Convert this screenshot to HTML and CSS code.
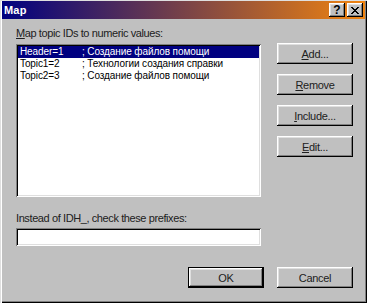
FILE: index.html
```html
<!DOCTYPE html>
<html lang="en">
<head>
    <meta charset="UTF-8">
    <title>Map</title>
    <link rel="stylesheet" href="styles.css">
</head>
<body>

    <div class="window">
        <!-- Title bar -->
        <div class="titlebar">
            <span class="title">Map</span>
            <div class="title-buttons">
                <button class="tbtn help">?</button>
                <button class="tbtn close">
                    <svg width="8" height="7" viewBox="0 0 8 7">
                        <path d="M0 0h2v1h1v1h2v-1h1v-1h2v1h-1v1h-1v1h-1v1h1v1h1v1h1v1h-2v-1h-1v-1h-2v1h-1v1h-2v-1h1v-1h1v-1h1v-1h-1v-1h-1v-1h-1z" fill="#000"/>
                    </svg>
                </button>
            </div>
        </div>

        <div class="content">
            <div class="top">
                <div class="left">
                    <div class="label"><u>M</u>ap topic IDs to numeric values:</div>
                    <div class="listbox">
                        <div class="row selected"><span class="id">Header=1</span><span>; Создание файлов помощи</span></div>
                        <div class="row"><span class="id">Topic1=2</span><span>; Технологии создания справки</span></div>
                        <div class="row"><span class="id">Topic2=3</span><span>; Создание файлов помощи</span></div>
                    </div>
                    <div class="label prefix-label">Instead of IDH_, check these prefixes:</div>
                    <div class="field"></div>
                </div>
                <div class="side">
                    <button class="btn"><u>A</u>dd...</button>
                    <button class="btn"><u>R</u>emove</button>
                    <button class="btn"><u>I</u>nclude...</button>
                    <button class="btn"><u>E</u>dit...</button>
                </div>
            </div>

            <div class="footer">
                <button class="btn default">OK</button>
                <button class="btn">Cancel</button>
            </div>
        </div>
    </div>

</body>
</html>
```

FILE: styles.css
```css
body {
    margin: 0;
    font-family: "Liberation Sans", Arial, sans-serif;
    font-size: 11px;
    color: #000;
    background-color: #c0c0c0;
}

.window {
    width: 367px;
    height: 303px;
    box-sizing: border-box;
    padding: 1px 2px 0 2px;
    background-color: #c0c0c0;
    box-shadow: inset 1px 1px 0 #dfdfdf, inset 2px 0 0 #fff,
                inset -1px -1px 0 #000, inset -2px -2px 0 #808080;
}

.titlebar {
    height: 18px;
    display: flex;
    align-items: center;
    justify-content: space-between;
    padding: 0 2px 0 2px;
    background: linear-gradient(to right, #000080, #f08410);
}

.title {
    color: #fff;
    font-weight: bold;
    font-size: 11px;
    letter-spacing: 0.2px;
}

.title-buttons {
    display: flex;
    gap: 2px;
}

.tbtn {
    width: 16px;
    height: 14px;
    padding: 0;
    border: none;
    background-color: #c0c0c0;
    font-family: "Liberation Sans", Arial, sans-serif;
    font-weight: bold;
    font-size: 12px;
    line-height: 14px;
    display: flex;
    align-items: center;
    justify-content: center;
    box-shadow: inset -1px -1px 0 #000, inset 1px 1px 0 #fff,
                inset -2px -2px 0 #808080, inset 2px 2px 0 #dfdfdf;
}

.content {
    padding: 8px 12px 0 14px;
    letter-spacing: -0.4px;
}

.top {
    display: flex;
    gap: 16px;
}

.left {
    width: 245px;
}

.label {
    line-height: 13px;
    height: 13px;
    margin-bottom: 4px;
    color: #202020;
}

.listbox {
    height: 153px;
    box-sizing: border-box;
    padding: 2px;
    background-color: #fff;
    font-size: 10px;
    letter-spacing: -0.1px;
    box-shadow: inset 1px 1px 0 #808080, inset -1px -1px 0 #fff,
                inset 2px 2px 0 #000, inset -2px -2px 0 #dfdfdf;
}

.row {
    height: 12px;
    line-height: 12px;
    padding-left: 2px;
    white-space: nowrap;
}

.row.selected {
    background-color: #000080;
    color: #fff;
}

.id {
    display: inline-block;
    width: 62px;
}

.prefix-label {
    margin-top: 15px;
    margin-bottom: 3px;
}

.field {
    height: 18px;
    background-color: #fff;
    box-shadow: inset 1px 1px 0 #808080, inset -1px -1px 0 #fff,
                inset 2px 2px 0 #000, inset -2px -2px 0 #dfdfdf;
}

.side {
    display: flex;
    flex-direction: column;
    gap: 10px;
    padding-top: 16px;
}

.btn {
    width: 76px;
    height: 21px;
    padding: 0;
    border: none;
    background-color: #c0c0c0;
    font-family: "Liberation Sans", Arial, sans-serif;
    font-size: 11px;
    letter-spacing: -0.3px;
    color: #202020;
    box-shadow: inset -1px -1px 0 #000, inset 1px 1px 0 #fff,
                inset -2px -2px 0 #808080, inset 2px 2px 0 #dfdfdf;
}

.btn.default {
    box-shadow: inset 0 0 0 1px #000,
                inset -2px -2px 0 #000, inset 2px 2px 0 #fff,
                inset -3px -3px 0 #808080, inset 3px 3px 0 #dfdfdf;
}

.footer {
    display: flex;
    justify-content: flex-end;
    gap: 13px;
    margin-top: 21px;
}
```
